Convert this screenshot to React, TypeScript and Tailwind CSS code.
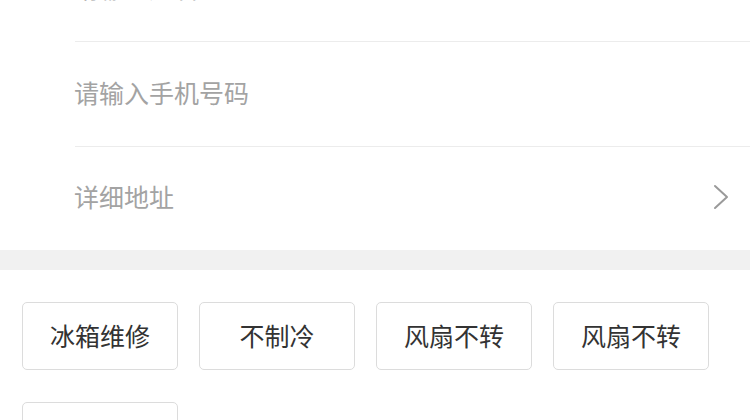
import React from "react";

const font = { fontFamily: '"Noto Sans CJK SC", "Noto Sans", sans-serif' };

function Row({ label, chevron, border }: { label: string; chevron?: boolean; border?: boolean }) {
  return (
    <div
      className={
        "ml-[75px] flex items-center justify-between pr-[22px] pb-[4px] " +
        (border ? "h-[105px] border-b border-[#ececec]" : "h-[103px]")
      }
    >
      <span className="-ml-[1px] text-[25px] text-[#a3a3a3] leading-none">{label}</span>
      {chevron && (
        <svg width="16" height="26" viewBox="0 0 16 26" fill="none" className="-mr-[1px]">
          <path d="M2 2 L14 13 L2 24" stroke="#9a9a9a" strokeWidth="2" strokeLinecap="round" strokeLinejoin="round" />
        </svg>
      )}
    </div>
  );
}

const tags = ["冰箱维修", "不制冷", "风扇不转", "风扇不转", "冰箱维修"];

export default function App() {
  return (
    <div className="w-[750px] h-[420px] overflow-hidden bg-white" style={font}>
      <div className="-mt-[63px]">
        <Row label="请输入姓名" border />
        <Row label="请输入手机号码" border />
        <Row label="详细地址" chevron />
      </div>
      <div className="h-[20px] bg-[#f1f1f1]" />
      <div className="pt-[32px] pl-[22px] flex flex-wrap gap-x-[21px] gap-y-[32px]">
        {tags.map((t, i) => (
          <div
            key={i}
            className="w-[156px] h-[68px] rounded-[5px] border border-[#dcdcdc] flex items-center justify-center text-[25px] text-[#333333]"
          >
            {t}
          </div>
        ))}
      </div>
    </div>
  );
}
